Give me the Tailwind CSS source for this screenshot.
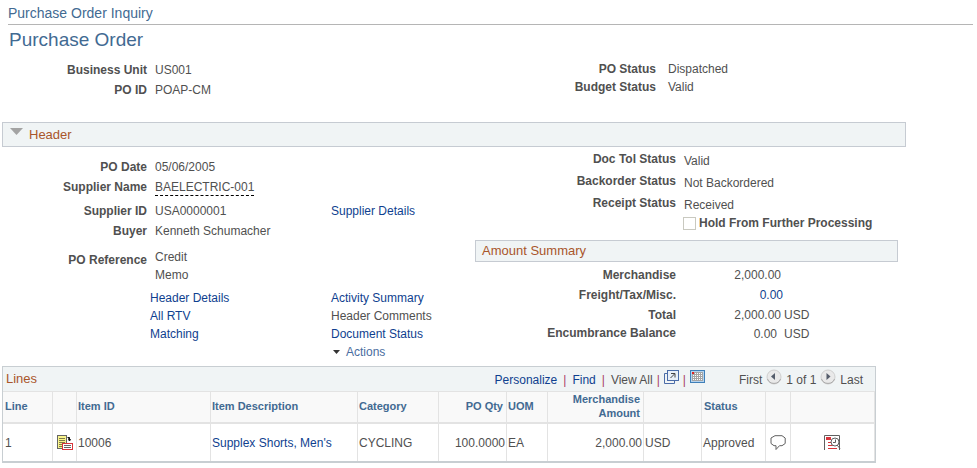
<!DOCTYPE html>
<html lang="en">
  <head>
    <meta charset="UTF-8" />
    <meta name="viewport" content="width=device-width, initial-scale=1.0" />
    <script src="https://cdn.jsdelivr.net/npm/@tailwindcss/browser@4"></script>
    <title>Purchase Order Inquiry</title>
  </head>
  <body class="bg-white font-['Liberation_Sans',Arial,sans-serif] text-xs text-[#505050]">
    <!-- page title -->
    <header class="ml-2 mr-1">
      <h1 class="border-b border-[#b5b5b5] pt-[3px] pb-px text-[14px] leading-5 text-[#426a92]">Purchase Order Inquiry</h1>
      <h2 class="pl-px pt-[3px] text-[19px] leading-6 text-[#426a92]">Purchase Order</h2>
    </header>

    <main class="max-w-[906px] pl-[2px]">
      <!-- key fields -->
      <section class="grid grid-cols-[473fr_431fr] pt-1.5">
        <dl class="grid grid-cols-[145px_1fr] content-start gap-x-2 pt-0.5 leading-5">
          <dt class="text-right font-bold">Business Unit</dt>
          <dd>US001</dd>
          <dt class="text-right font-bold">PO ID</dt>
          <dd>POAP-CM</dd>
        </dl>
        <dl class="grid grid-cols-[181px_1fr] content-start gap-x-3 pt-0.5 leading-[18px]">
          <dt class="text-right font-bold">PO Status</dt>
          <dd>Dispatched</dd>
          <dt class="text-right font-bold">Budget Status</dt>
          <dd>Valid</dd>
        </dl>
      </section>

      <!-- header group box -->
      <section class="pt-[22px]">
        <h3 class="flex h-[25px] border border-[#c6cbd2] bg-[#f0f4f5] text-[13px] leading-6 text-[#a9562b]">
          <button type="button" aria-label="Collapse Header" class="ml-[7px] flex w-[19px] items-start pt-[5px]">
            <svg width="13" height="7" viewBox="0 0 13 7"><path d="M0 0H13L6.5 7Z" fill="#a3a3a3" /></svg>
          </button>
          Header
        </h3>

        <div class="grid grid-cols-[473fr_431fr]">
          <div class="pt-2.5">
            <dl class="grid grid-cols-[145px_168px_1fr] gap-x-2 leading-5">
              <dt class="text-right font-bold">PO Date</dt>
              <dd class="col-span-2">05/06/2005</dd>
              <dt class="text-right font-bold">Supplier Name</dt>
              <dd class="col-span-2 pb-1">
                <span class="inline-block border-b border-dashed border-black leading-4">BAELECTRIC-001</span>
              </dd>
              <dt class="text-right font-bold">Supplier ID</dt>
              <dd>USA0000001</dd>
              <dd><a href="#" class="text-[#0f3f8f]">Supplier Details</a></dd>
              <dt class="text-right font-bold">Buyer</dt>
              <dd class="col-span-2">Kenneth Schumacher</dd>
              <dt class="pt-[9px] text-right font-bold">PO Reference</dt>
              <dd class="col-span-2 w-12 pt-[7px] leading-[18px]">Credit Memo</dd>
            </dl>
            <nav class="grid grid-cols-[181px_1fr] pl-[148px] pt-[5px] leading-[18px] text-[#0f3f8f]">
              <a href="#">Header Details</a>
              <a href="#">Activity Summary</a>
              <a href="#">All RTV</a>
              <span class="text-[#505050]">Header Comments</span>
              <a href="#">Matching</a>
              <a href="#">Document Status</a>
              <button type="button" class="col-start-2 flex items-center gap-1.5 pl-0.5 text-[#4a6da0]">
                <svg width="7" height="4" viewBox="0 0 7 4"><path d="M0 0H7L3.5 4Z" fill="#333" /></svg>
                Actions
              </button>
            </nav>
          </div>

          <div class="pt-[3px]">
            <dl class="grid grid-cols-[201px_1fr] gap-x-2 leading-[22px]">
              <dt class="text-right font-bold leading-[18px]">Doc Tol Status</dt>
              <dd>Valid</dd>
              <dt class="text-right font-bold leading-[18px]">Backorder Status</dt>
              <dd>Not Backordered</dd>
              <dt class="text-right font-bold leading-[18px]">Receipt Status</dt>
              <dd>Received</dd>
            </dl>
            <div class="flex h-3.5 items-center gap-[3px] pl-52">
              <input id="hold" type="checkbox" class="size-[13px] appearance-none border border-[#c9c9c0] bg-white" />
              <label for="hold" class="font-bold">Hold From Further Processing</label>
            </div>

            <!-- amounts -->
            <h3 class="mr-2 mt-2.5 h-[22px] border border-[#c6cbd2] bg-[#f0f4f5] pl-1.5 text-[13px] leading-5 text-[#a9562b]">Amount Summary</h3>
            <dl class="grid grid-cols-[201px_107px_1fr] pt-[3px] leading-5">
              <dt class="text-right font-bold">Merchandise</dt>
              <dd class="col-start-2 pr-0.5 text-right">2,000.00</dd>
              <dt class="col-start-1 text-right font-bold">Freight/Tax/Misc.</dt>
              <dd class="text-right"><a href="#" class="text-[#0f3f8f]">0.00</a></dd>
              <dt class="col-start-1 text-right font-bold">Total</dt>
              <dd class="pr-0.5 text-right">2,000.00</dd>
              <dd class="pl-px">USD</dd>
              <dt class="text-right font-bold leading-4">Encumbrance Balance</dt>
              <dd class="pr-1.5 text-right leading-[18px]">0.00</dd>
              <dd class="pl-px leading-[18px]">USD</dd>
            </dl>
          </div>
        </div>
      </section>

      <!-- lines grid -->
      <section class="mr-[30px] mt-[5px] border border-b-2 border-[#c8ced2]">
        <div class="flex h-6 items-start justify-between bg-[#f0f4f5] pl-[3px] pr-3">
          <h3 class="text-[13px] leading-[23px] text-[#a9562b]">Lines</h3>
          <div class="flex leading-[27px]">
            <a href="#" class="text-[#0f3f8f]">Personalize</a>
            <span class="px-1.5 text-[#a83c68]">|</span>
            <a href="#" class="text-[#0f3f8f]">Find</a>
            <span class="px-1.5 text-[#a83c68]">|</span>
            <span>View All</span>
            <span class="px-1 text-[#a83c68]">|</span>
            <button type="button" aria-label="Zoom" class="self-start pt-[3px]">
              <svg width="15" height="14" viewBox="0 0 15 14" fill="none">
                <path d="M3 3.5H.5V13.5H10.5V11" stroke="#4a6ca8" />
                <rect x="3.5" y=".5" width="11" height="10" fill="#e9f0f8" stroke="#4a6ca8" />
                <path d="M6.5 8L10.5 4M7 3.5H11V7.5" stroke="#444" />
              </svg>
            </button>
            <span class="px-1 text-[#a83c68]">|</span>
            <button type="button" aria-label="Download" class="self-start pt-[3px]">
              <svg width="15" height="13" viewBox="0 0 15 13">
                <rect x=".5" y=".5" width="14" height="12" fill="#b4d3ee" stroke="#3f7fb8" />
                <rect x="2" y="2" width="11" height="9" fill="#a5a5a5" />
                <path d="M3 3.5H13M3 5.5H13M3 7.5H13M3 9.5H13" stroke="#fff" stroke-dasharray="1 1" />
                <rect x="2" y="2" width="2" height="2" fill="#e02020" />
              </svg>
            </button>
            <span class="pl-[34px]">First</span>
            <button type="button" aria-label="Previous" class="self-start px-1 pt-0.5">
              <svg width="16" height="16" viewBox="0 0 16 16">
                <circle cx="8" cy="8" r="7" fill="#e9e9e9" stroke="#cfcfcf" />
                <path d="M1.5 10A7 7 0 0 0 14.5 10" fill="none" stroke="#aaa" />
                <path d="M5 7.5L9 4V11Z" fill="#555d6b" />
              </svg>
            </button>
            <span>1 of 1</span>
            <button type="button" aria-label="Next" class="self-start px-1 pt-0.5">
              <svg width="16" height="16" viewBox="0 0 16 16">
                <circle cx="8" cy="8" r="7" fill="#e9e9e9" stroke="#cfcfcf" />
                <path d="M1.5 10A7 7 0 0 0 14.5 10" fill="none" stroke="#aaa" />
                <path d="M10.5 7.5L6.5 4V11Z" fill="#555d6b" />
              </svg>
            </button>
            <span>Last</span>
          </div>
        </div>
        <table class="w-full table-fixed border-separate border-spacing-0 text-left">
          <colgroup>
            <col class="w-[50px]" />
            <col class="w-[24px]" />
            <col class="w-[134px]" />
            <col class="w-[147px]" />
            <col class="w-[81px]" />
            <col class="w-[68px]" />
            <col class="w-[41px]" />
            <col class="w-[96px]" />
            <col class="w-[58px]" />
            <col class="w-[64px]" />
            <col class="w-[25px]" />
            <col class="w-[84px]" />
          </colgroup>
          <thead class="bg-[#f9f9f9] text-[11px] leading-[14px] text-[#426a92]">
            <tr class="h-[33px] *:border-b-2 *:border-r *:border-t *:border-[#e3e3e3] *:pb-0.5">
              <th class="pl-0.5">Line</th>
              <th></th>
              <th class="pl-px">Item ID</th>
              <th class="pl-px">Item Description</th>
              <th class="pl-px">Category</th>
              <th class="pr-[3px] text-right">PO Qty</th>
              <th class="pl-px">UOM</th>
              <th class="pr-[3px] text-right">Merchandise Amount</th>
              <th></th>
              <th class="pl-0.5">Status</th>
              <th></th>
              <th></th>
            </tr>
          </thead>
          <tbody>
            <tr class="h-[37px] *:border-r *:border-[#e3e3e3]">
              <td class="pl-0.5">1</td>
              <td>
                <button type="button" aria-label="Line Details" class="ml-1 block">
                  <svg width="17" height="16" viewBox="0 0 17 16" fill="none">
                    <rect x=".5" y=".5" width="9" height="13" fill="#f9f48c" stroke="#666" />
                    <path d="M2 3.5H8M2 5.5H8M2 7.5H8M2 9.5H5M2 11.5H5" stroke="#807d48" />
                    <path d="M10.5 2.5H12.5V5M11.5 4.5H13.5L12.5 6Z" stroke="#111" fill="#111" />
                    <rect x="5.5" y="8.5" width="10" height="6" fill="#fff" stroke="#d8353c" />
                    <path d="M7 10.5H14M7 12.5H14" stroke="#666" />
                  </svg>
                </button>
              </td>
              <td class="pl-px">10006</td>
              <td class="pl-px"><a href="#" class="text-[#0f3f8f]">Supplex Shorts, Men's</a></td>
              <td class="pl-px">CYCLING</td>
              <td class="pr-px text-right">100.0000</td>
              <td class="pl-px">EA</td>
              <td class="pr-px text-right">2,000.00</td>
              <td class="pl-px">USD</td>
              <td class="pl-px">Approved</td>
              <td>
                <button type="button" aria-label="Line Comments" class="mx-auto block">
                  <svg width="17" height="16" viewBox="0 0 17 16">
                    <path d="M5 .7H12L15.2 3V8.5L12 10.7H9.5L6 14.5V10.7H4L1 8.5V3Z" fill="#fff" stroke="#606060" stroke-linejoin="round" />
                  </svg>
                </button>
              </td>
              <td>
                <button type="button" aria-label="Schedule" class="mx-auto block">
                  <svg width="17" height="15" viewBox="0 0 17 15" fill="none">
                    <path d="M.5 15V.5H15.5V15" stroke="#606060" />
                    <path d="M2 3.5H7" stroke="#d8353c" stroke-width="3" />
                    <path d="M4 7.5H7M4 10.5H9M4 13.5H13" stroke="#d8353c" />
                    <circle cx="11" cy="7" r="4" fill="#fff" stroke="#606060" />
                    <path d="M11.5 4.5V7.5H9M13 10L16 13.5" stroke="#606060" />
                  </svg>
                </button>
              </td>
            </tr>
          </tbody>
        </table>
      </section>
    </main>
  </body>
</html>
